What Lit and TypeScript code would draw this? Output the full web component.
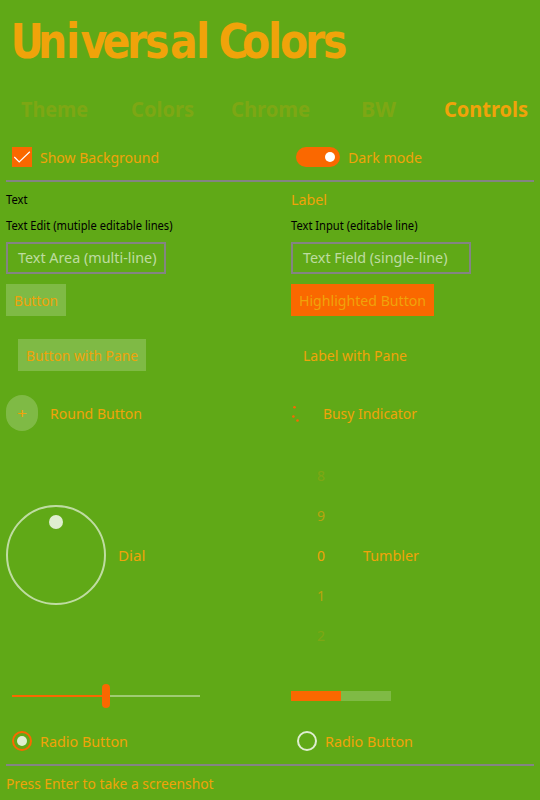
import { LitElement, html, css, svg } from "lit";
import { customElement, property } from "lit/decorators.js";

/** One line of text fitted to a fixed advance width. */
@customElement("fit-label")
class FitLabel extends LitElement {
  @property() text = "";
  @property({ type: Number }) width = 0;
  @property({ type: Number }) baseline = 16;
  @property({ type: Number }) height = 20;

  static styles = css`
    :host { display: block; flex: none; color: #f0a30a; font: 14.6px "Noto Sans", "Open Sans", sans-serif; }
    :host(.small) { font-size: 12px; color: #000; }
    :host(.tab) { font-size: 20.5px; font-weight: 700; }
    :host(.hint) { color: rgba(255, 255, 255, 0.6); }
    svg { display: block; overflow: visible; }
    text { fill: currentColor; }
  `;

  render() {
    return html`<svg width=${this.width} height=${this.height}>
      <text x="0" y=${this.baseline} textLength=${this.width} lengthAdjust="spacingAndGlyphs">${this.text}</text>
    </svg>`;
  }
}

/** Horizontal squeeze of the heading, and the left edge of each of its letters. */
const HEADING_SCALE = 0.96;
const HEADING_X = [10.5, 38, 66, 80.5, 102.5, 127, 145, 170, 196, 210, 218.5, 242, 268, 280, 305, 323];

@customElement("app-root")
class AppRoot extends LitElement {
  static styles = css`
    :host {
      display: block; width: 540px; height: 800px; overflow: hidden;
      background: #60a917; font-family: "Noto Sans", sans-serif;
      --accent: #fa6800; --base: #848484;
    }
    .title { display: block; height: 88px; width: 540px; }
    .title text { font: bold 47.5px "DejaVu Sans Condensed", "DejaVu Sans", sans-serif; fill: #f0a30a; }
    .tabs { display: grid; grid-template-columns: repeat(5, 108px); height: 44px; align-items: center; justify-items: center; margin-bottom: 2px; }
    .dim { opacity: 0.2; }
    .row { display: grid; grid-template-columns: 285px 1fr; padding-left: 6px; align-items: center; }
    .cell { display: flex; align-items: center; }
    .line { height: 2px; margin: 0 6px; background: var(--base); }
    .h46 { height: 46px; } .h30 { height: 30px; margin-top: 2px; } .h22 { height: 22px; }
    .h44 { height: 44px; } .h40 { height: 40px; } .h70 { height: 70px; } .h238 { height: 238px; }
    .h34 { height: 34px; }
    .check { width: 20px; height: 20px; margin: 0 8px 0 6px; background: var(--accent); }
    .switch { box-sizing: border-box; width: 44px; height: 20px; margin: 0 8px 0 5px; padding: 5px; border-radius: 10px; background: var(--accent); display: flex; justify-content: flex-end; }
    .knob { width: 10px; height: 10px; border-radius: 50%; background: #fff; }
    .field { box-sizing: border-box; height: 32px; width: 160px; padding-left: 10px; border: 2px solid var(--base); display: flex; align-items: center; }
    .wide { width: 180px; }
    .button { box-sizing: border-box; height: 32px; padding: 0 8px; background: rgba(255, 255, 255, 0.2); display: flex; align-items: center; }
    .hot { background: var(--accent); }
    .pane { padding-left: 12px; }
    .round { width: 32px; height: 36px; border-radius: 16px; background: rgba(255, 255, 255, 0.2); display: flex; align-items: center; justify-content: center; margin-right: 12px; }
    .busy { width: 20px; height: 20px; margin-right: 12px; fill: var(--accent); }
    .dial { box-sizing: border-box; width: 100px; height: 100px; border: 2px solid rgba(255, 255, 255, 0.6); border-radius: 50%; margin-right: 12px; display: flex; justify-content: center; }
    .needle { width: 14px; height: 14px; margin-top: 8px; border-radius: 50%; background: rgba(255, 255, 255, 0.8); }
    .tumbler { width: 60px; margin-right: 12px; display: grid; grid-auto-rows: 40px; align-items: center; justify-items: center; }
    .slider { display: flex; align-items: center; margin-left: 6px; }
    .done { width: 90px; height: 2px; background: var(--accent); }
    .grip { width: 8px; height: 24px; border-radius: 4px; background: var(--accent); }
    .rest { width: 90px; height: 2px; background: rgba(255, 255, 255, 0.4); }
    .progress { width: 100px; height: 10px; background: rgba(255, 255, 255, 0.2); }
    .bar { width: 50px; height: 10px; background: var(--accent); }
    .radio { box-sizing: border-box; width: 20px; height: 20px; margin: 0 8px 0 6px; border: 2px solid rgba(255, 255, 255, 0.8); border-radius: 50%; display: flex; align-items: center; justify-content: center; }
    .on { border-color: var(--accent); }
    .dot { width: 10px; height: 10px; border-radius: 50%; background: rgba(255, 255, 255, 0.8); }
  `;

  private label(text: string, width: number, cls = "", baseline = 16) {
    return html`<fit-label class=${cls} .text=${text} .width=${width} .baseline=${baseline}></fit-label>`;
  }

  render() {
    const tabs: [string, number][] = [["Theme", 67], ["Colors", 63], ["Chrome", 79], ["BW", 35], ["Controls", 84]];
    const digits: [string, number][] = [["8", 0.2], ["9", 0.6], ["0", 1], ["1", 0.6], ["2", 0.2]];
    return html`
      <svg class="title">
        <text transform="scale(${HEADING_SCALE} 1)" x=${HEADING_X.map((x) => x / HEADING_SCALE).join(" ")} y="58">Universal Colors</text>
      </svg>
      <div class="tabs">
        ${tabs.map(([t, w], i) => html`<fit-label class="tab ${i < 4 ? "dim" : ""}" .text=${t} .width=${w} .height=${30} .baseline=${22}></fit-label>`)}
      </div>
      <div class="row h46">
        <div class="cell">
          <svg class="check" viewBox="0 0 20 20"><path d="M2.3 10 L7.2 15 L17.8 4.8" fill="none" stroke="#fff" stroke-width="1.2" /></svg>
          ${this.label("Show Background", 119)}
        </div>
        <div class="cell"><div class="switch"><div class="knob"></div></div>${this.label("Dark mode", 74)}</div>
      </div>
      <div class="line"></div>
      <div class="row h30">${this.label("Text", 21.5, "small", 15)}${this.label("Label", 36)}</div>
      <div class="row h22">
        ${this.label("Text Edit (mutiple editable lines)", 166.5, "small", 15)}
        ${this.label("Text Input (editable line)", 126.5, "small", 15)}
      </div>
      <div class="row h44">
        <div class="field">${this.label("Text Area (multi-line)", 138.5, "hint", 15)}</div>
        <div class="field wide">${this.label("Text Field (single-line)", 144.5, "hint", 15)}</div>
      </div>
      <div class="row h40">
        <div class="cell"><div class="button">${this.label("Button", 44)}</div></div>
        <div class="cell"><div class="button hot">${this.label("Highlighted Button", 127)}</div></div>
      </div>
      <div class="row h70">
        <div class="cell pane"><div class="button">${this.label("Button with Pane", 112)}</div></div>
        <div class="cell pane">${this.label("Label with Pane", 104)}</div>
      </div>
      <div class="row h46">
        <div class="cell"><div class="round">${this.label("+", 10)}</div>${this.label("Round Button", 92)}</div>
        <div class="cell">
          <svg class="busy" viewBox="0 0 20 20">
            ${[[3.5, 4.2], [2.4, 13.5], [6.5, 17.5]].map(([x, y]) => svg`<circle cx=${x} cy=${y} r="1.3" />`)}
          </svg>
          ${this.label("Busy Indicator", 94)}
        </div>
      </div>
      <div class="row h238">
        <div class="cell"><div class="dial"><div class="needle"></div></div>${this.label("Dial", 27.5)}</div>
        <div class="cell">
          <div class="tumbler">
            ${digits.map(([d, o]) => html`<div style="opacity:${o}">${this.label(d, 8)}</div>`)}
          </div>
          ${this.label("Tumbler", 56)}
        </div>
      </div>
      <div class="row h44">
        <div class="slider"><div class="done"></div><div class="grip"></div><div class="rest"></div></div>
        <div class="progress"><div class="bar"></div></div>
      </div>
      <div class="row h46">
        <div class="cell"><div class="radio on"><div class="dot"></div></div>${this.label("Radio Button", 88)}</div>
        <div class="cell"><div class="radio"></div>${this.label("Radio Button", 88)}</div>
      </div>
      <div class="line"></div>
      <div class="row h34">${this.label("Press Enter to take a screenshot", 207.5)}</div>
    `;
  }
}
